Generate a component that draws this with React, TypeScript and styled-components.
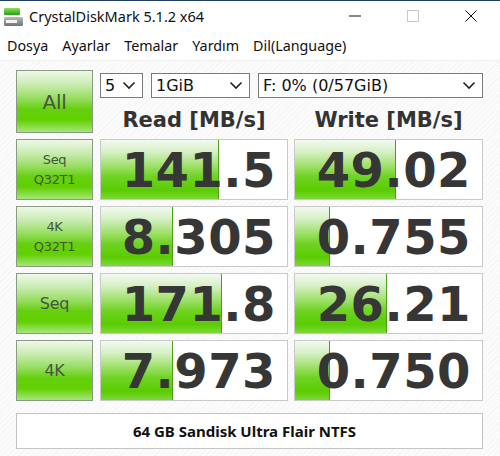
import React from 'react';
import styled, { createGlobalStyle } from 'styled-components';

interface ResultRow {
    key : number
    label : string[]
    read : string
    write : string
    readBar : number
    writeBar : number
}

const rows : ResultRow[] = [
    { key : 1, label : ['Seq', 'Q32T1'], read : '141.5', write : '49.02', readBar : 117, writeBar : 100 },
    { key : 2, label : ['4K', 'Q32T1'], read : '8.305', write : '0.755', readBar : 71, writeBar : 34 },
    { key : 3, label : ['Seq'], read : '171.8', write : '26.21', readBar : 120, writeBar : 91 },
    { key : 4, label : ['4K'], read : '7.973', write : '0.750', readBar : 71, writeBar : 34 },
];

const menuItems = ['Dosya', 'Ayarlar', 'Temalar', 'Yardım', 'Dil(Language)'];

const GlobalStyle = createGlobalStyle`
    html, body {
        margin : 0;
        padding : 0;
        background : #ffffff;
    }
    body {
        width : 500px;
        height : 456px;
        overflow : hidden;
        font-family : "Noto Sans", "Open Sans", sans-serif;
    }
`;

const Window = styled.div`
    width : 500px;
    height : 456px;
    display : flex;
    flex-direction : column;
    background : #ffffff;
    border-top : 1px solid #1d3d63;
    box-sizing : border-box;
`;
const TitleBar = styled.div`
    height : 30px;
    display : flex;
    align-items : center;
    padding-left : 3px;
    background : #ffffff;
`;
const TitleText = styled.span`
    font-family : "Noto Sans", sans-serif;
    font-size : 14.5px;
    color : #111111;
    margin-left : 5px;
    flex : 1;
`;
const WinButtons = styled.div`
    display : flex;
    height : 100%;
`;
const WinButton = styled.div`
    width : 58px;
    height : 100%;
    display : flex;
    align-items : center;
    justify-content : center;
`;
const MenuBar = styled.div`
    height : 27px;
    padding-top : 2px;
    display : flex;
    align-items : center;
    background : #ffffff;
    border-bottom : 1px solid #f0f0f0;
`;
const MenuItem = styled.span`
    font-family : "Noto Sans", sans-serif;
    font-size : 14.3px;
    color : #111111;
    padding : 0 7px 2px 7px;
`;
const Body = styled.div`
    flex : 1;
    padding : 9px 16px 0 16px;
    background-color : #fbfbfb;
    background-image : repeating-linear-gradient(135deg, rgba(0, 0, 0, 0.025) 0 1px, transparent 1px 4px);
`;
const Grid = styled.div`
    display : grid;
    grid-template-columns : 78px 188px 189px;
    grid-template-rows : 63px repeat(4, 61px);
    column-gap : 6px;
    row-gap : 6px;
`;
const TestButton = styled.div<{ $size : number, $line : number }>`
    box-sizing : border-box;
    width : 77px;
    border : 1px solid #8a9a84;
    background : linear-gradient(to bottom, #eef8e8 0%, #c9ecb2 22%, #8fdb55 48%, #66d010 62%, #62d000 80%, #a6e67a 100%);
    display : flex;
    flex-direction : column;
    align-items : center;
    justify-content : center;
    color : #46563c;
    font-family : "DejaVu Sans", sans-serif;
    font-size : ${(p) => p.$size}px;
    line-height : ${(p) => p.$line}px;
    letter-spacing : -0.3px;
`;
const TopCell = styled.div`
    grid-column : 2 / span 2;
    display : flex;
    flex-direction : column;
`;
const SelectRow = styled.div`
    display : flex;
    gap : 8px;
    margin-top : 3px;
`;
const Select = styled.div<{ $width : number }>`
    box-sizing : border-box;
    width : ${(p) => p.$width}px;
    height : 25px;
    border : 1px solid #7a7a7a;
    background : #ffffff;
    display : flex;
    align-items : center;
    justify-content : space-between;
    padding : 0 6px 0 4px;
    font-family : "DejaVu Sans", sans-serif;
    font-size : 16px;
    color : #111111;
`;
const Headers = styled.div`
    display : grid;
    grid-template-columns : 188px 189px;
    column-gap : 6px;
    margin-top : 9px;
`;
const Header = styled.div`
    text-align : center;
    font-family : "DejaVu Sans", sans-serif;
    font-weight : bold;
    font-size : 21px;
    line-height : 26px;
    color : #333333;
`;
const ValueBox = styled.div`
    position : relative;
    box-sizing : border-box;
    border : 1px solid #c9c9c9;
    background : #ffffff;
    display : flex;
    align-items : center;
    justify-content : flex-end;
    padding-right : 11px;
    overflow : hidden;
`;
const Bar = styled.div`
    position : absolute;
    left : 0;
    top : 0;
    bottom : 0;
    border-right : 1px solid #4e9e1e;
    background : linear-gradient(to bottom, #f3f9f0 0%, #d6f0c6 20%, #9ce066 45%, #6fd324 62%, #5acc00 85%, #7dd83a 100%);
`;
const Value = styled.span`
    position : relative;
    font-family : "DejaVu Sans", sans-serif;
    font-weight : bold;
    font-size : 48px;
    line-height : 1;
    color : #363636;
    letter-spacing : 0.5px;
`;
const Comment = styled.div`
    box-sizing : border-box;
    margin-top : 12px;
    width : 467px;
    height : 36px;
    border : 1px solid #c4c4c4;
    background : #ffffff;
    display : flex;
    align-items : center;
    justify-content : center;
    padding-right : 10px;
    font-family : "Noto Sans", sans-serif;
    font-weight : bold;
    font-size : 15px;
    color : #111111;
`;

const Chevron = () => (
    <svg width="14" height="9" viewBox="0 0 14 9">
        <path d="M1.5 1.5 L7 7 L12.5 1.5" fill="none" stroke="#222" strokeWidth="1.6" />
    </svg>
);

const AppIcon = () => (
    <svg width="21" height="21" viewBox="0 0 21 21">
        <defs>
            <linearGradient id="g" x1="0" y1="0" x2="0" y2="1">
                <stop offset="0" stopColor="#8be05a" />
                <stop offset="1" stopColor="#2f9a16" />
            </linearGradient>
            <linearGradient id="d" x1="0" y1="0" x2="0" y2="1">
                <stop offset="0" stopColor="#b8bcbf" />
                <stop offset="1" stopColor="#6d7275" />
            </linearGradient>
        </defs>
        <rect x="1" y="2" width="16" height="7" rx="1" fill="url(#g)" />
        <rect x="1" y="11" width="19" height="9" rx="1.5" fill="url(#d)" />
        <rect x="3" y="14" width="11" height="3" fill="#f2f2f2" />
    </svg>
);

const App : React.FC = () => {
    return (
        <React.Fragment>
            <GlobalStyle />
            <Window>
                <TitleBar>
                    <AppIcon />
                    <TitleText>CrystalDiskMark 5.1.2 x64</TitleText>
                    <WinButtons>
                        <WinButton>
                            <svg width="12" height="2"><rect width="12" height="1" y="0.5" fill="#111" /></svg>
                        </WinButton>
                        <WinButton>
                            <svg width="12" height="12"><rect x="0.5" y="0.5" width="11" height="11" fill="none" stroke="#c8c8c8" /></svg>
                        </WinButton>
                        <WinButton>
                            <svg width="12" height="12"><path d="M0.5 0.5 L11.5 11.5 M11.5 0.5 L0.5 11.5" stroke="#111" strokeWidth="1" /></svg>
                        </WinButton>
                    </WinButtons>
                </TitleBar>
                <MenuBar>
                    {menuItems.map((item) => <MenuItem key={item}>{item}</MenuItem>)}
                </MenuBar>
                <Body>
                    <Grid>
                        <TestButton $size={20} $line={24}>All</TestButton>
                        <TopCell>
                            <SelectRow>
                                <Select $width={43}>5<Chevron /></Select>
                                <Select $width={99}>1GiB<Chevron /></Select>
                                <Select $width={225}>F: 0% (0/57GiB)<Chevron /></Select>
                            </SelectRow>
                            <Headers>
                                <Header>Read [MB/s]</Header>
                                <Header>Write [MB/s]</Header>
                            </Headers>
                        </TopCell>
                        {rows.map((row) => (
                            <React.Fragment key={row.key}>
                                <TestButton
                                    $size={row.label.length === 1 ? 16 : 13}
                                    $line={row.label.length === 1 ? 20 : 20}
                                >
                                    {row.label.map((l) => <span key={l}>{l}</span>)}
                                </TestButton>
                                <ValueBox>
                                    <Bar style={{ width : row.readBar }} />
                                    <Value>{row.read}</Value>
                                </ValueBox>
                                <ValueBox>
                                    <Bar style={{ width : row.writeBar }} />
                                    <Value>{row.write}</Value>
                                </ValueBox>
                            </React.Fragment>
                        ))}
                    </Grid>
                    <Comment>64 GB Sandisk Ultra Flair NTFS</Comment>
                </Body>
            </Window>
        </React.Fragment>
    );
};

export default App;
